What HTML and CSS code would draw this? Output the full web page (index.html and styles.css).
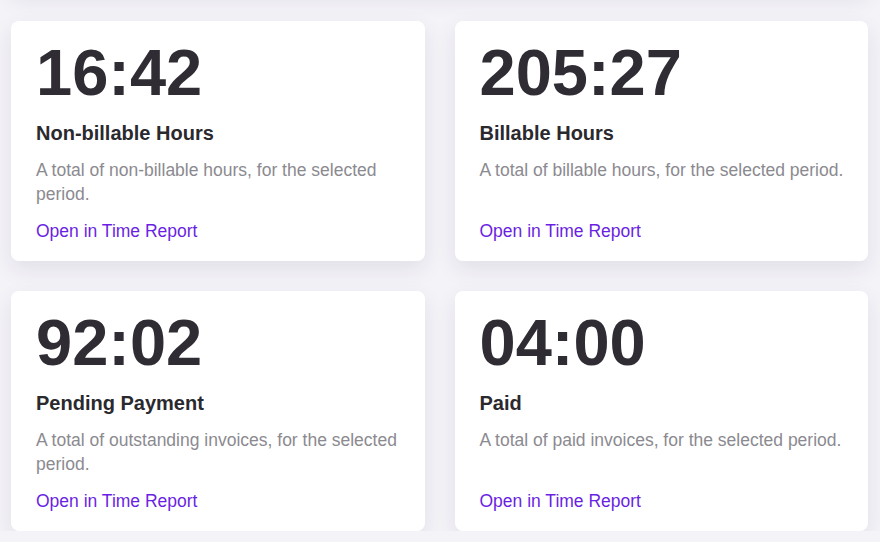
FILE: index.html
```html
<!DOCTYPE html>
<html lang="en">
<head>
    <meta charset="UTF-8">
    <meta name="viewport" content="width=device-width, initial-scale=1.0">
    <title>Time Summary</title>
    <link rel="stylesheet" href="styles.css">
</head>
<body>
    <div class="summary-grid">
        <div class="summary-header"></div>

        <div class="card">
            <div class="card-value">16:42</div>
            <div class="card-title">Non-billable Hours</div>
            <p class="card-text">A total of non-billable hours, for the selected period.</p>
            <a class="card-link" href="#">Open in Time Report</a>
        </div>
        <div class="card">
            <div class="card-value">205:27</div>
            <div class="card-title">Billable Hours</div>
            <p class="card-text">A total of billable hours, for the selected period.</p>
            <a class="card-link" href="#">Open in Time Report</a>
        </div>

        <div class="card">
            <div class="card-value">92:02</div>
            <div class="card-title">Pending Payment</div>
            <p class="card-text">A total of outstanding invoices, for the selected period.</p>
            <a class="card-link" href="#">Open in Time Report</a>
        </div>
        <div class="card">
            <div class="card-value">04:00</div>
            <div class="card-title">Paid</div>
            <p class="card-text">A total of paid invoices, for the selected period.</p>
            <a class="card-link" href="#">Open in Time Report</a>
        </div>
    </div>
</body>
</html>
```

FILE: styles.css
```css
body {
    margin: 0;
    padding: 0 12px 0 11px;
    background-color: #f4f3f8;
    font-family: "Liberation Sans", Arial, sans-serif;
    overflow: hidden;
}
.summary-grid {
    display: grid;
    grid-template-columns: 1fr 1fr;
    grid-auto-rows: 240px;
    gap: 30px;
    margin-top: -249px;
}
.summary-header {
    grid-column: 1 / -1;
    background-color: #fff;
    border-radius: 8px;
    box-shadow: 0 8px 22px rgba(40, 30, 70, 0.09);
}
.card {
    display: flex;
    flex-direction: column;
    padding: 0 18px 19px 25px;
    background-color: #fff;
    border-radius: 8px;
    box-shadow: 0 8px 22px rgba(40, 30, 70, 0.09);
}
.card-value {
    margin-top: 15px;
    font-size: 65px;
    font-weight: bold;
    line-height: 74px;
    color: #2f2c34;
}
.card-title {
    margin-top: 12px;
    font-size: 20px;
    font-weight: bold;
    line-height: 23px;
    color: #2a292e;
}
.card-text {
    margin: 13px 0 0;
    font-size: 17.5px;
    line-height: 24px;
    color: #8b8a90;
}
.card-link {
    margin-top: auto;
    font-size: 17.5px;
    color: #6a1fe3;
    text-decoration: none;
}
```
